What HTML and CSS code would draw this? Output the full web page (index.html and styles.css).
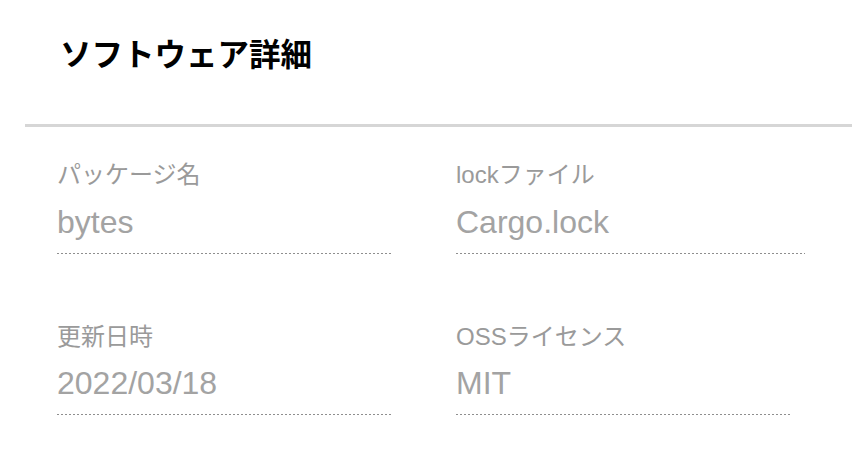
FILE: index.html
```html
<!DOCTYPE html>
<html lang="ja">
<head>
<meta charset="utf-8">
<title>ソフトウェア詳細</title>
<link rel="stylesheet" href="styles.css">
</head>
<body>
<div class="page">
  <header class="header">
    <h1 class="title">ソフトウェア詳細</h1>
  </header>
  <div class="divider"></div>
  <div class="grid">
    <div class="field">
      <div class="label">パッケージ名</div>
      <div class="value">bytes</div>
    </div>
    <div class="field field--wide">
      <div class="label">lockファイル</div>
      <div class="value">Cargo.lock</div>
    </div>
    <div class="field field--row2">
      <div class="label">更新日時</div>
      <div class="value">2022/03/18</div>
    </div>
    <div class="field field--row2">
      <div class="label">OSSライセンス</div>
      <div class="value">MIT</div>
    </div>
  </div>
</div>
</body>
</html>
```
FILE: styles.css
```css
html, body {
  margin: 0;
  padding: 0;
  background: #ffffff;
}
body {
  font-family: "Liberation Sans", "Noto Sans CJK JP", sans-serif;
  width: 852px;
  height: 452px;
  overflow: hidden;
}
.page {
  display: flex;
  flex-direction: column;
}
.header {
  padding: 36px 0 0 60px;
}
.title {
  margin: 0;
  font-family: "Noto Sans CJK JP", sans-serif;
  font-size: 31.5px;
  line-height: 32px;
  font-weight: 700;
  color: #000;
}
.divider {
  margin: 56px 0 0 25px;
  height: 3px;
  background: #d6d6d6;
}
.grid {
  display: grid;
  grid-template-columns: 334px 349px;
  column-gap: 65px;
  row-gap: 70px;
  padding: 36px 0 0 57px;
  align-items: start;
}
.field {
  width: 334px;
  display: flex;
  flex-direction: column;
}
.field--wide {
  width: 349px;
}
.label {
  font-size: 24px;
  line-height: 24px;
  color: #9a9a9a;
}
.value {
  margin-top: 19px;
  font-size: 32px;
  line-height: 32px;
  color: #a3a3a3;
  padding-bottom: 16px;
  border-bottom: 1px solid transparent;
  background-image: linear-gradient(to right, #8e8e8e 50%, transparent 50%);
  background-size: 4px 1px;
  background-repeat: repeat-x;
  background-position: left bottom;
}
.field--row2 .value {
  margin-top: 18px;
  padding-bottom: 16px;
}
```
